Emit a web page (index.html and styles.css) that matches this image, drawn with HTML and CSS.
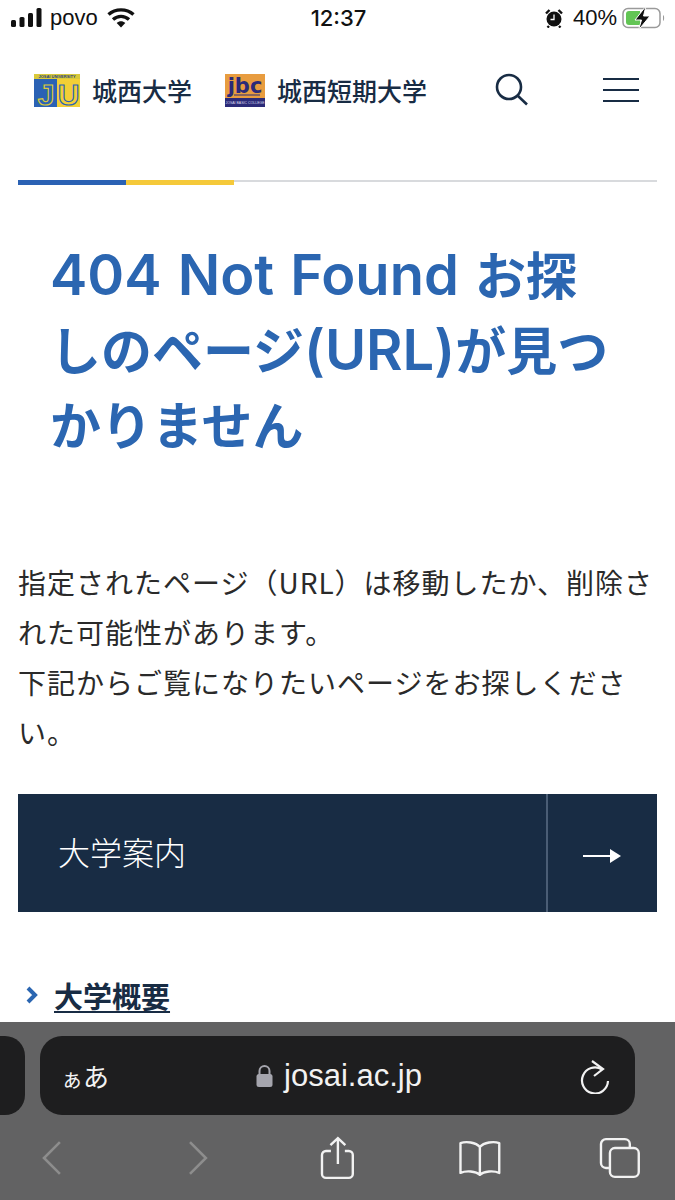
FILE: index.html
```html
<!DOCTYPE html>
<html lang="ja">
  <head>
    <meta charset="utf-8">
    <title>404 Not Found</title>
    <link rel="stylesheet" href="styles.css">
  </head>
  <body>
    <div class="status">
      <div class="status-left">
        <svg class="signal" width="32" height="20" viewBox="0 0 32 20">
          <rect x="0" y="12" width="5" height="7" rx="1.5"/>
          <rect x="8.5" y="9" width="5" height="10" rx="1.5"/>
          <rect x="17" y="5" width="5" height="14" rx="1.5"/>
          <rect x="25.5" y="0" width="5" height="19" rx="1.5"/>
        </svg>
        <span class="carrier">povo</span>
        <svg class="wifi" width="28" height="20" viewBox="0 0 28 20">
          <path d="M1.5 6.5C8.5 0.3 19.500 0.3 26.500 6.500M6 11.500C10.800 7.300 17.200 7.300 22 11.500" fill="none" stroke="#111" stroke-width="3.400"/>
          <path d="M9.700 15 14 19.500 18.300 15C15.800 12.600 12.200 12.600 9.700 15Z" fill="#111"/>
        </svg>
      </div>
      <div class="clock">12:37</div>
      <div class="status-right">
        <svg class="alarm" width="18" height="20" viewBox="0 0 18 20">
          <circle cx="9" cy="11" r="7.500" fill="#111"/>
          <path d="M1 5.500 4.500 2M17 5.500 13.500 2M4 18l-1.500 1.500M14 18l1.500 1.500" stroke="#111" stroke-width="2.400" fill="none"/>
          <path d="M9 6.500V11.500H5.500" stroke="#fff" stroke-width="1.300" fill="none"/>
        </svg>
        <span class="battery-pct">40%</span>
        <svg class="battery" width="44" height="24" viewBox="0 0 44 24">
          <rect x="1" y="2.500" width="37" height="19" rx="5" fill="none" stroke="#9a9a9a" stroke-width="1.500"/>
          <path d="M4 8a3 3 0 0 1 3-3H18V19H7a3 3 0 0 1-3-3Z" fill="#62c554"/>
          <path d="M41 9c1.500.5 1.500 5.500 0 6Z" fill="#9a9a9a"/>
          <path d="M24 0 13 14H19.500L16.500 24 28 10H21.500Z" fill="#111" stroke="#fff" stroke-width="1"/>
        </svg>
      </div>
    </div>

    <header class="site-head">
      <a class="brand brand-ju">
        <svg class="logo" width="46" height="33" viewBox="0 0 46 33">
          <rect width="23" height="33" fill="#2b62b4"/>
          <rect x="23" width="23" height="33" fill="#f2cf36"/>
          <rect width="46" height="5" fill="#d9c93a"/>
          <text class="logo-tiny" x="23" y="4" text-anchor="middle">JOSAI UNIVERSITY</text>
          <text class="logo-j" x="12" y="31" text-anchor="middle">J</text>
          <text class="logo-u" x="34.500" y="31" text-anchor="middle">U</text>
        </svg>
        <span>城西大学</span>
      </a>
      <a class="brand brand-jbc">
        <svg class="logo" width="40" height="33" viewBox="0 0 40 33">
          <rect width="40" height="33" fill="#e89c3f"/>
          <rect y="24" width="40" height="9" fill="#2b2a78"/>
          <text class="logo-jbc" x="20" y="19" text-anchor="middle">jbc</text>
          <rect x="9" y="20.500" width="26" height="1" fill="#2b2a78"/>
          <text class="logo-sub" x="20" y="30" text-anchor="middle">JOSAI BASIC COLLEGE</text>
        </svg>
        <span>城西短期大学</span>
      </a>
      <svg class="search" width="34" height="34" viewBox="0 0 34 34">
        <circle cx="15" cy="14" r="12" fill="none" stroke="#182c44" stroke-width="2.600"/>
        <path d="M23.500 22.500 33 31.500" fill="none" stroke="#182c44" stroke-width="2.600"/>
      </svg>
      <div class="burger"><i></i><i></i><i></i></div>
    </header>

    <main class="page">
      <div class="rule"><i class="rule-blue"></i><i class="rule-yellow"></i></div>
      <h1><span class="en">404 Not Found </span>お探しのページ<span class="en">(URL)</span>が見つかりません</h1>
      <p class="lead">指定されたページ（URL）は移動したか、削除された可能性があります。<br>下記からご覧になりたいページをお探しください。</p>
      <a class="big-link">
        <span class="big-label">大学案内</span>
        <span class="big-arrow">
          <svg width="38" height="14" viewBox="0 0 38 14">
            <path d="M0 6H27V8H0Z" fill="#fff"/>
            <path d="M27 0 38 7 27 14Z" fill="#fff"/>
          </svg>
        </span>
      </a>
      <a class="sub-link">
        <svg width="14" height="20" viewBox="0 0 14 20">
          <path d="M3 3 10 10 3 17" fill="none" stroke="#2b66b1" stroke-width="4"/>
        </svg>
        <span>大学概要</span>
      </a>
    </main>

    <div class="toolbar">
      <div class="tabs">
        <div class="tab-prev"></div>
        <div class="tab-url">
          <span class="aa"><small>ぁ</small>あ</span>
          <span class="url">
            <svg width="17" height="24" viewBox="0 0 17 24">
              <path d="M3.500 11V7a5 5 0 0 1 10 0v4" fill="none" stroke="#a5a5ad" stroke-width="2"/>
              <rect x="0.500" y="10" width="16" height="13" rx="2.500" fill="#a5a5ad"/>
            </svg>
            josai.ac.jp
          </span>
          <svg class="reload" width="30" height="36" viewBox="0 0 30 36">
            <path d="M22 11.500A13 13 0 1 0 28 23" fill="none" stroke="#f2f2f2" stroke-width="2.200"/>
            <path d="M12 3 23 11 14 18" fill="none" stroke="#f2f2f2" stroke-width="2.200"/>
          </svg>
        </div>
      </div>
      <div class="nav">
        <svg class="nav-back" width="22" height="36" viewBox="0 0 22 36">
          <path d="M19 2 3 18 19 34" fill="none" stroke="#8d8d8d" stroke-width="2.600"/>
        </svg>
        <svg class="nav-fwd" width="22" height="36" viewBox="0 0 22 36">
          <path d="M3 2 19 18 3 34" fill="none" stroke="#8d8d8d" stroke-width="2.600"/>
        </svg>
        <svg class="nav-share" width="36" height="44" viewBox="0 0 36 44">
          <path d="M11 15H6a4 4 0 0 0-4 4V38a4 4 0 0 0 4 4H29a4 4 0 0 0 4-4V19a4 4 0 0 0-4-4H25" fill="none" stroke="#f2f2f2" stroke-width="2.400"/>
          <path d="M18 28V2M10.500 9 18 2 25.500 9" fill="none" stroke="#f2f2f2" stroke-width="2.400"/>
        </svg>
        <svg class="nav-book" width="44" height="36" viewBox="0 0 44 36">
          <path d="M22 7C18 2 8 1 2.500 3V33C8 30.500 18 31 22 35 26 31 36 30.500 41.500 33V3C36 1 26 2 22 7ZM22 7V35" fill="none" stroke="#f2f2f2" stroke-width="2.400" stroke-linejoin="round"/>
        </svg>
        <svg class="nav-tabs" width="42" height="42" viewBox="0 0 42 42">
          <path d="M10 31H7a5 5 0 0 1-5-5V7a5 5 0 0 1 5-5H26a5 5 0 0 1 5 5V10" fill="none" stroke="#f2f2f2" stroke-width="2.400"/>
          <rect x="11" y="11" width="29" height="29" rx="5" fill="none" stroke="#f2f2f2" stroke-width="2.400"/>
        </svg>
      </div>
    </div>
  </body>
</html>
```

FILE: styles.css
```css
* {
  box-sizing: border-box;
}
html,
body {
  margin: 0;
  height: 1200px;
  overflow: hidden;
}
body {
  display: flex;
  flex-direction: column;
  background-color: #fff;
  color: #182c44;
  font-family: "Liberation Sans", "Noto Sans CJK JP", sans-serif;
}
a {
  color: inherit;
}

/* status bar */
.status {
  height: 36px;
  padding: 0 9px 0 11px;
  display: grid;
  grid-template-columns: 1fr auto 1fr;
  align-items: center;
  color: #111;
  font-size: 22px;
}
.status-left {
  display: flex;
  align-items: center;
}
.signal {
  fill: #111;
}
.carrier {
  margin-left: 7px;
}
.wifi {
  margin-left: 9px;
}
.clock {
  font-weight: 500;
  font-family: "Inter", sans-serif;
  font-size: 22px;
}
.status-right {
  display: flex;
  align-items: center;
  justify-content: flex-end;
}
.battery-pct {
  margin: 0 5px 0 10px;
}

/* site header */
.site-head {
  height: 108px;
  padding: 0 0 0 34px;
  display: flex;
  align-items: center;
  font-family: "Noto Sans CJK JP", sans-serif;
  font-weight: 500;
  font-size: 25px;
}
.brand {
  display: flex;
  align-items: center;
  white-space: nowrap;
}
.brand svg {
  margin-right: 12px;
}
.brand-jbc {
  margin-left: 33px;
}
.search {
  margin-left: 67px;
}
.burger {
  margin-left: 75px;
  width: 36px;
  height: 24px;
  display: flex;
  flex-direction: column;
  justify-content: space-between;
}
.burger i {
  height: 2px;
  background-color: #182c44;
}
.logo {
  overflow: visible;
}
.logo-tiny {
  font: bold 4px "Liberation Sans", sans-serif;
  fill: #1f3f80;
}
.logo-j,
.logo-u {
  font: bold 30px "Liberation Sans", sans-serif;
  fill: none;
  stroke-width: 1.2;
}
.logo-j {
  stroke: #d9c93a;
}
.logo-u {
  stroke: #2b62b4;
}
.logo-jbc {
  font: bold 21px "DejaVu Sans", sans-serif;
  fill: #2b2a78;
}
.logo-sub {
  font: 3.500px "Liberation Sans", sans-serif;
  fill: #d8d8e8;
}

/* page body */
.page {
  flex: 1;
  min-height: 0;
  overflow: hidden;
  padding: 36px 18px 0;
  font-family: "Noto Sans CJK JP", sans-serif;
}
.rule {
  height: 5px;
  display: flex;
  background: linear-gradient(#d8dadd, #d8dadd) left top / 100% 2px no-repeat;
}
.rule i {
  display: block;
  width: 108px;
  height: 5px;
}
.rule-blue {
  background-color: #2b62b4;
}
.rule-yellow {
  background-color: #f5c93a;
}
h1 {
  margin: 51px 37px 0 32px;
  color: #2b66b1;
  font-family: "Noto Sans CJK JP", sans-serif;
  font-weight: 700;
  font-size: 51px;
  line-height: 75px;
}
h1 .en {
  font-family: "Inter", sans-serif;
  font-weight: 600;
  font-size: 56px;
  line-height: 0;
  word-spacing: 2px;
}
.lead {
  margin: 95.500px 0 0;
  padding: 0 3px 0 0;
  font-size: 28px;
  letter-spacing: 1px;
  line-height: 50px;
  color: #2a2a2a;
}
.big-link {
  margin-top: 37px;
  height: 118px;
  display: flex;
  background-color: #182c44;
  color: #fff;
}
.big-label {
  flex: 1;
  padding: 0 0 4px 40px;
  display: flex;
  align-items: center;
  font-size: 32px;
  font-weight: 300;
}
.big-arrow {
  width: 111px;
  padding: 7px 2px 0 0;
  border-left: 2px solid #4a5d75;
  display: flex;
  align-items: center;
  justify-content: center;
}
.sub-link {
  margin: 63px 0 0 7px;
  display: flex;
  align-items: center;
  gap: 15px;
  font-size: 29px;
  font-weight: 700;
  line-height: 40px;
}
.sub-link span {
  text-decoration: underline;
  text-underline-offset: 3px;
}

/* safari toolbar */
.toolbar {
  height: 178px;
  background-color: #626263;
  color: #f2f2f2;
}
.tabs {
  display: flex;
  gap: 15px;
  padding-top: 14px;
}
.tab-prev {
  width: 25px;
  height: 79px;
  background-color: #1e1e1f;
  border-radius: 0 20px 20px 0;
}
.tab-url {
  width: 595px;
  height: 79px;
  padding: 0 25px 0 21px;
  display: grid;
  grid-template-columns: 1fr auto 1fr;
  align-items: center;
  background-color: #1e1e1f;
  border-radius: 22px;
}
.reload {
  justify-self: end;
}
.aa {
  font-family: "Noto Sans CJK JP", sans-serif;
  font-size: 26px;
}
.aa small {
  font-size: 22px;
}
.url {
  margin-left: 7px;
  display: flex;
  align-items: center;
  gap: 11px;
  font-size: 31px;
}
.nav {
  height: 85px;
  padding: 0 34px 0 41px;
  display: flex;
  align-items: center;
}
.nav-fwd {
  margin-left: 124px;
}
.nav-share {
  margin-left: 111px;
}
.nav-book {
  margin-left: 102px;
}
.nav-tabs {
  margin-left: 98px;
}
```
